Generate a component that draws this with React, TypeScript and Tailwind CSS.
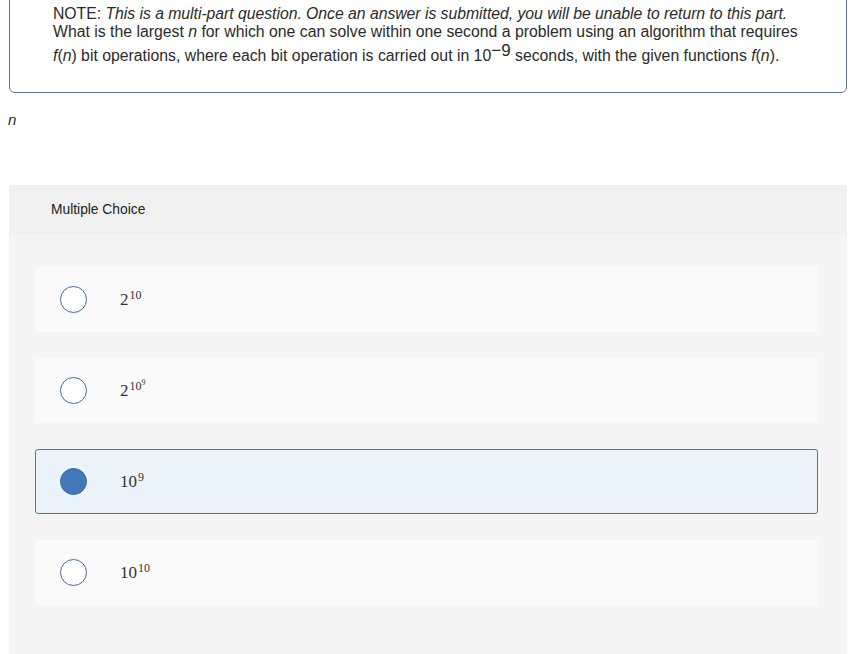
import React from 'react';

const options = [
  { id: 'a', label: <>2<sup className="text-[12px] top-[-0.5em] ml-[1px]">10</sup></> },
  {
    id: 'b',
    label: (
      <>
        2
        <sup className="text-[12px] top-[-0.5em] ml-[1px]">
          10<sup className="text-[8px] top-[-0.6em]">9</sup>
        </sup>
      </>
    ),
  },
  { id: 'c', label: <>10<sup className="text-[12px] top-[-0.5em] ml-[1px]">9</sup></> },
  { id: 'd', label: <>10<sup className="text-[12px] top-[-0.5em] ml-[1px]">10</sup></> },
];

export default function App() {
  const selected = 'c';

  return (
    <div className="w-[862px] h-[654px] overflow-hidden bg-white font-['Liberation_Sans',sans-serif] text-[#2b2b2b]">
      <div className="mx-[9px] w-[838px] -mt-[20px] border border-[#5b7a9c] rounded-[6px] pt-[24px] pb-[27px] pl-[43px] text-[15.8px] leading-[18px]">
        <p className="tracking-[-0.04px]">
          NOTE: <i>This is a multi-part question. Once an answer is submitted, you will be unable to return to this part.</i>
        </p>
        <p>
          What is the largest <i>n</i> for which one can solve within one second a problem using an algorithm that requires
        </p>
        <p className="mt-[6px]">
          <i>f</i>(<i>n</i>) bit operations, where each bit operation is carried out in 10
          <sup className="text-[17px] top-[-0.3em]">−9</sup> seconds, with the given functions <i>f</i>(<i>n</i>).
        </p>
      </div>

      <div className="pl-[8px] pt-[16px] h-[92px] text-[15px] italic">n</div>

      <div className="mx-[9px] w-[838px] h-[470px] bg-[#f5f5f5]">
        <div className="h-[50px] bg-[#f0f0f0] flex items-center pl-[42px] text-[13.8px] text-[#222]">
          Multiple Choice
        </div>
        <div className="pl-[26px] pr-[29px] pt-[32px] flex flex-col gap-[26px]">
          {options.map((o) => {
            const on = o.id === selected;
            return (
              <div
                key={o.id}
                className={
                  on
                    ? 'h-[65px] rounded-[3px] border border-[#4179bd] bg-[#eaf2fa] flex items-center pl-[24px]'
                    : 'h-[65px] rounded-[3px] border border-transparent bg-[#fafafa] flex items-center pl-[24px]'
                }
              >
                <span
                  className={
                    on
                      ? 'w-[27px] h-[27px] rounded-full border border-[#3b6a99] bg-[#4377b7] shrink-0'
                      : 'w-[27px] h-[27px] rounded-full border border-[#3b6a99] bg-white shrink-0'
                  }
                />
                <span className="ml-[33px] font-['Liberation_Serif',serif] text-[17px] text-[#333]">{o.label}</span>
              </div>
            );
          })}
        </div>
      </div>
    </div>
  );
}
